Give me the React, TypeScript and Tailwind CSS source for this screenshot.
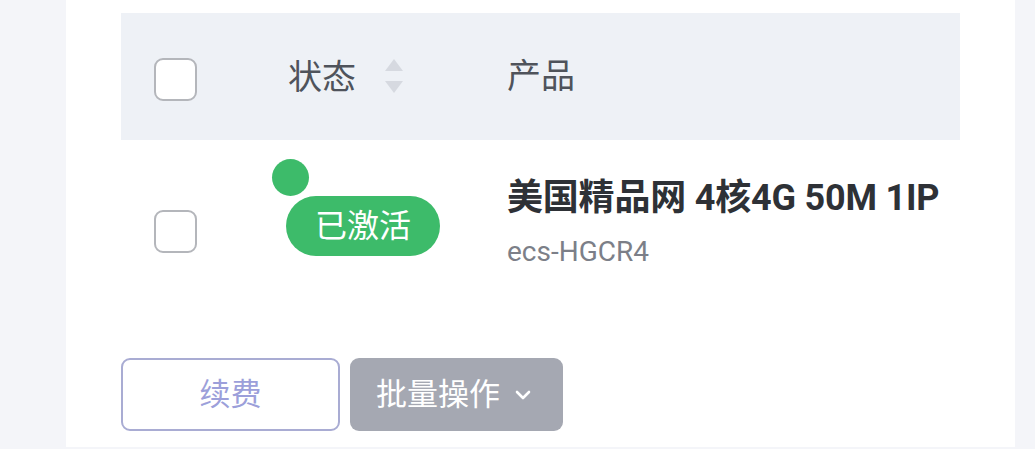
import React from "react";

const font = { fontFamily: 'Roboto, "Noto Sans CJK SC", sans-serif' };

function Checkbox() {
  return <div className="w-[43px] h-[43px] rounded-[9px] border-2 border-[#b4b6bb] bg-white" />;
}

export default function App() {
  return (
    <div className="w-full h-[449px] bg-[#f4f5f9] flex pl-[66px] pr-[20px] overflow-hidden" style={font}>
      <div className="flex-1 h-[447px] bg-white pl-[55px] pr-[55px] pt-[13px] flex flex-col">
        {/* header */}
        <div className="h-[127px] bg-[#eef1f6] flex items-center">
          <div className="w-[167px] pl-[33px] pt-[6px]">
            <Checkbox />
          </div>
          <div className="w-[219px] flex items-center">
            <span className="text-[34px] leading-none text-[#4f535b]">状态</span>
            <svg width="20" height="36" viewBox="0 0 20 36" className="ml-[28px]">
              <path d="M10 0 L19 12 L1 12 Z" fill="#d6d9e0" />
              <path d="M1 22 L19 22 L10 34 Z" fill="#d6d9e0" />
            </svg>
          </div>
          <div className="flex-1">
            <span className="text-[34px] leading-none text-[#4f535b]">产品</span>
          </div>
        </div>
        {/* row */}
        <div className="h-[180px] flex items-start">
          <div className="w-[167px] pl-[33px] pt-[70px]">
            <Checkbox />
          </div>
          <div className="w-[219px] pt-[56px]">
            <div className="relative ml-[-2px] inline-flex h-[60px] w-[154px] items-center justify-center rounded-full bg-[#3dbb6a]">
              <span className="text-[32px] leading-none text-white">已激活</span>
              <div className="absolute left-[-14px] top-[-37px] w-[37px] h-[37px] rounded-full bg-[#3dbb6a]" />
            </div>
          </div>
          <div className="flex-1 pt-[38px]">
            <div className="text-[36px] leading-[40px] font-bold text-[#2e3136] whitespace-nowrap tracking-[-0.2px]">美国精品网 4核4G 50M 1IP</div>
            <div className="mt-[18px] text-[28px] leading-[32px] text-[#7c7f88]">ecs-HGCR4</div>
          </div>
        </div>
        {/* buttons */}
        <div className="mt-[38px] flex gap-[10px]">
          <button className="w-[219px] h-[73px] rounded-[9px] border-2 border-[#a9acd3] bg-white flex items-center justify-center">
            <span className="text-[31px] leading-none text-[#9c9fda]">续费</span>
          </button>
          <button className="w-[213px] h-[73px] rounded-[9px] bg-[#a5a8b2] flex items-center justify-center gap-[15px] pr-[6px]">
            <span className="text-[31px] leading-none text-white">批量操作</span>
            <svg width="16" height="10" viewBox="0 0 16 10">
              <path d="M2 2 L8 8 L14 2" fill="none" stroke="white" strokeWidth="2.6" strokeLinecap="round" strokeLinejoin="round" />
            </svg>
          </button>
        </div>
      </div>
    </div>
  );
}
